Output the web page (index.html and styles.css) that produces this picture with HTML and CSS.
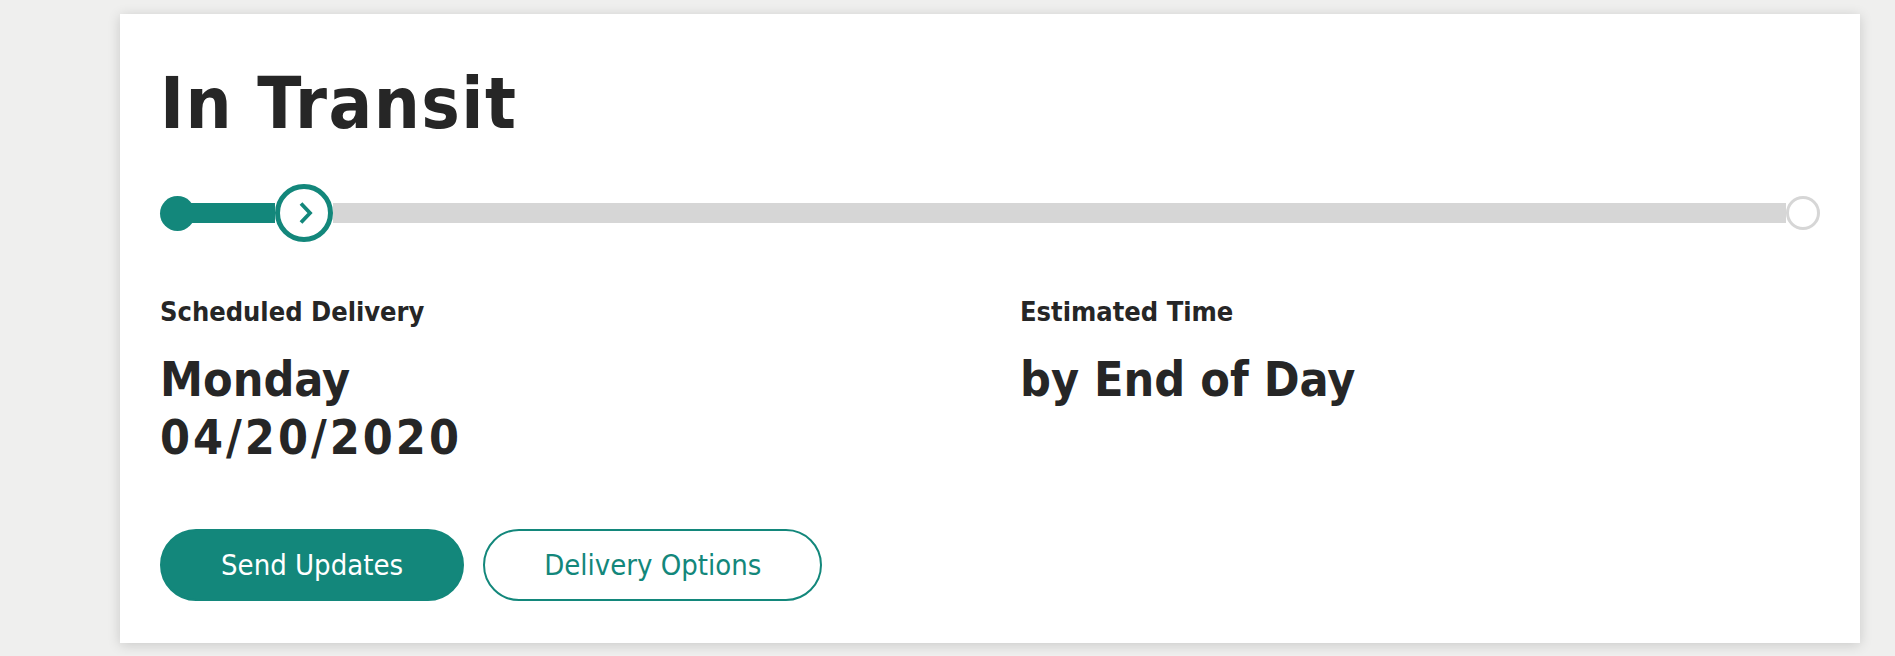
FILE: index.html
```html
<!DOCTYPE html>
<html lang="en">
<head>
    <meta charset="UTF-8">
    <meta name="viewport" content="width=device-width, initial-scale=1.0">
    <title>In Transit</title>

    <link rel="stylesheet" href="styles.css">
</head>
<body>
    <div class="card">
        <h1>In Transit</h1>

        <div class="progress" aria-label="Shipment progress">
            <div class="dot done"></div>
            <div class="bar filled"></div>
            <div class="dot current">
                <svg width="26" height="26" viewBox="0 0 26 26" aria-hidden="true">
                    <path d="M10 3.5 L19 13 L10 22.5" fill="none" stroke="#13877b" stroke-width="3.8"/>
                </svg>
            </div>
            <div class="bar empty"></div>
            <div class="dot end"></div>
        </div>

        <div class="details">
            <div class="detail">
                <div class="label">Scheduled Delivery</div>
                <div class="value">Monday<br><span class="date">04/20/2020</span></div>
            </div>
            <div class="detail">
                <div class="label">Estimated Time</div>
                <div class="value">by End of Day</div>
            </div>
        </div>

        <div class="actions">
            <button class="btn primary">Send Updates</button>
            <button class="btn outline">Delivery Options</button>
        </div>
    </div>
</body>
</html>
```

FILE: styles.css
```css
* {
    box-sizing: border-box;
    font-family: "DejaVu Sans Condensed", "DejaVu Sans", Verdana, sans-serif;
    font-stretch: condensed;
}

body {
    margin: 0;
    padding: 14px 35px 12px 120px;
    background: #efefee;
    color: #262626;
}

.card {
    background: #fff;
    padding: 53px 40px 42px;
    box-shadow: 0 2px 12px rgba(0, 0, 0, 0.16);
}

h1 {
    margin: 0;
    font-size: 72px;
    line-height: 72px;
    font-weight: bold;
    letter-spacing: 1.5px;
}

.progress {
    display: flex;
    align-items: center;
    height: 58px;
    margin-top: 45px;
}

.bar {
    height: 20px;
}

.bar.filled {
    width: 97px;
    margin-left: -17px;
    background: #13877b;
}

.bar.empty {
    flex: 1;
    background: #d6d6d6;
}

.dot {
    flex: none;
    border-radius: 50%;
    display: flex;
    align-items: center;
    justify-content: center;
}

.dot.done {
    width: 35px;
    height: 35px;
    background: #13877b;
}

.dot.current {
    width: 58px;
    height: 58px;
    background: #fff;
    border: 5px solid #13877b;
}

.dot.end {
    width: 34px;
    height: 34px;
    background: #fff;
    border: 3px solid #d6d6d6;
}

.details {
    display: grid;
    grid-template-columns: 1fr 1fr;
    column-gap: 60px;
    margin-top: 54px;
}

.label {
    font-size: 27px;
    line-height: 32px;
    font-weight: bold;
}

.value {
    margin-top: 22px;
    font-size: 48px;
    line-height: 58px;
    font-weight: bold;
}

.date {
    letter-spacing: 3px;
}

.actions {
    display: flex;
    gap: 19px;
    margin-top: 63px;
}

.btn {
    height: 72px;
    padding: 0 59px;
    border-radius: 36px;
    border: 2px solid #13877b;
    font-size: 29px;
    cursor: pointer;
}

.btn.primary {
    background: #13877b;
    color: #fff;
}

.btn.outline {
    background: #fff;
    color: #13877b;
}
```
